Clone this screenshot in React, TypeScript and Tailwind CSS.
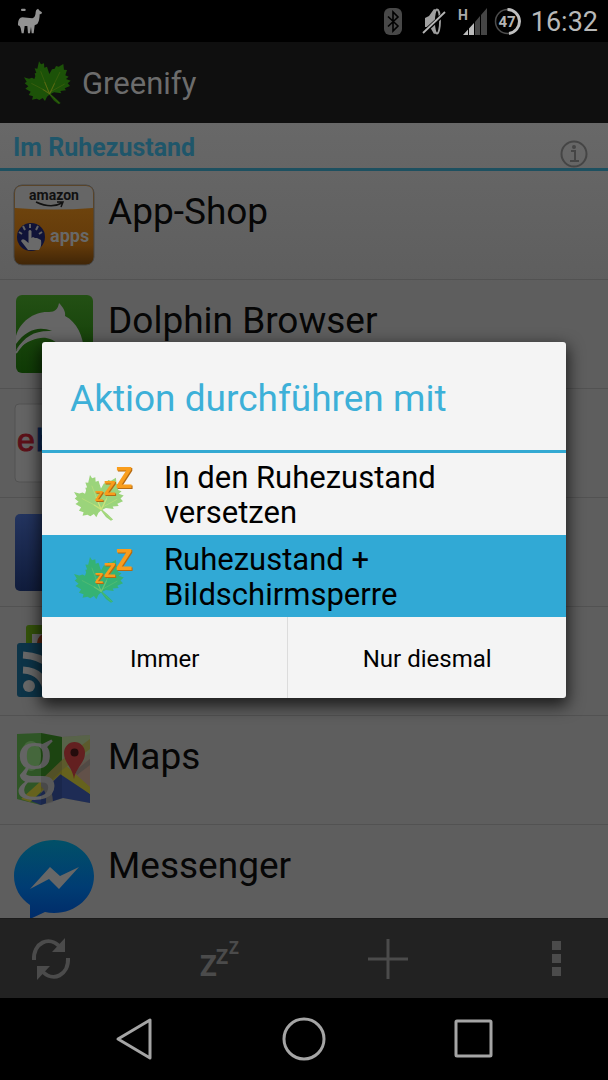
import React from 'react';

const LEAF =
  'M45 0 L51 9 L60 6 L61 19 L69 16 L76 38 L84 24 L92 22 L96 14 L104 16 L118 8 L120 25 L129 26 L124 42 L134 46 L126 53 L140 58 L131 66 L138 74 L122 81 L126 87 L109 89 L112 96 L90 93 L80 98 L94 110 L110 125 L104 129 L90 118 L76 100 L69 106 L63 119 L56 110 L46 116 L38 112 L24 115 L27 105 L14 101 L20 91 L4 82 L13 75 L2 66 L8 61 L0 48 L15 52 L24 49 L31 53 L34 44 L32 36 L37 35 L32 21 L40 22 Z';

interface LeafProps {
  fill: string;
  vein: string;
}

const LeafShape: React.FC<LeafProps> = ({ fill, vein }) => (
  <g>
    <path d={LEAF} fill={fill} />
    <path
      d="M76 97 L50 30 M76 97 L108 32 M74 93 L22 66 M76 93 L122 68 M76 97 Q90 112 106 126"
      stroke={vein}
      strokeWidth="2"
      fill="none"
      opacity="0.5"
    />
    <path d="M77 98 L62 62 M77 98 L56 84 M77 98 L92 66" stroke={vein} strokeWidth="3" fill="none" opacity="0.7" />
  </g>
);

const SleepLeaf: React.FC<LeafProps> = ({ fill, vein }) => (
  <svg className="h-16 w-16 shrink-0 overflow-visible" viewBox="0 0 64 64" aria-hidden="true">
    <g transform="translate(4 12) scale(0.355)">
      <LeafShape fill={fill} vein={vein} />
    </g>
    <g
      className="drop-shadow-[1px_1px_0_#b56a12]"
      fill="#f99d1c"
      fontFamily="Open Sans, sans-serif"
      fontWeight="700"
    >
      <text x="25" y="38" fontSize="14">Z</text>
      <text x="34" y="32" fontSize="20">Z</text>
      <text x="46" y="25" fontSize="28">Z</text>
    </g>
  </svg>
);

const AmazonIcon = () => (
  <>
    <defs>
      <linearGradient id="amz" x1="0" y1="0" x2="0" y2="1">
        <stop offset="0.3" stopColor="#6d430d" />
        <stop offset="0.75" stopColor="#633a0a" />
        <stop offset="1" stopColor="#3f2507" />
      </linearGradient>
    </defs>
    <rect x="1" y="1" width="80" height="80" rx="8" fill="url(#amz)" stroke="#474747" />
    <path d="M2 24 V9 Q2 2 9 2 H73 Q80 2 80 9 V24 Q41 27 2 24Z" fill="#666" />
    <text x="41" y="16" textAnchor="middle" fontSize="14" fontWeight="700" fontFamily="Roboto, sans-serif" fill="#111">
      amazon
    </text>
    <path d="M23 18 Q38 25 49 19 M44 18 L50 18 L48 23" stroke="#111" strokeWidth="1.500" fill="none" />
    <circle cx="18" cy="53" r="14" fill="#101338" />
    <path
      d="M17 40 V44 M10 42 L12 46 M25 42 L23 46 M6 48 L9 50 M29 48 L26 50"
      stroke="#626262"
      strokeWidth="2"
    />
    <path
      d="M15.500 47 Q17 45 18.500 47 V54 L20 53 L22 54 L24 54 L26 55 L28 56 Q29 62 26 66 H15 L8 57 Q9 54 12 56 L15.500 59Z"
      fill="#6a6a6a"
    />
    <text x="37" y="58" fontSize="18" fontWeight="700" fontFamily="Roboto, sans-serif" fill="#686868">
      apps
    </text>
  </>
);

const DolphinIcon = () => (
  <>
    <defs>
      <linearGradient id="dol" x1="0" y1="0" x2="0" y2="1">
        <stop offset="0" stopColor="#235014" />
        <stop offset="1" stopColor="#0f3a05" />
      </linearGradient>
    </defs>
    <rect x="3" y="2" width="77" height="78" rx="6" fill="url(#dol)" />
    <path
      d="M3 43 C7 28 22 18 36 19 C42 19 45 16 46 10 C50 14 53 19 52 23 C64 29 70 43 71 57 L56 50 H44 C36 44 25 40 3 57Z"
      fill="#666"
    />
    <path d="M3 51 C14 36 26 33 39 38 C22 37 12 43 3 57Z" fill="#153d0a" />
    <path d="M3 60 C14 42 28 40 40 44" stroke="#666" strokeWidth="2" fill="none" />
  </>
);

const EbayIcon = () => (
  <>
    <rect x="2" y="2" width="78" height="78" rx="4" fill="#646464" stroke="#525252" />
    <g fontSize="32" fontFamily="Liberation Sans, sans-serif">
      <text x="4" y="49" fill="#5c1018" stroke="#5c1018">e</text>
      <text x="23" y="49" fill="#0b2450" stroke="#0b2450">b</text>
      <text x="42" y="49" fill="#6b5a10">a</text>
      <text x="61" y="49" fill="#3b5410">y</text>
    </g>
  </>
);

const FacebookIcon = () => (
  <>
    <defs>
      <linearGradient id="fb" x1="0" y1="0" x2="0" y2="1">
        <stop offset="0" stopColor="#23345f" />
        <stop offset="1" stopColor="#101c3c" />
      </linearGradient>
    </defs>
    <rect x="2" y="3" width="78" height="77" rx="5" fill="url(#fb)" />
  </>
);

const ReaderIcon = () => (
  <>
    <rect x="13" y="5" width="56" height="45" rx="3" fill="#34520a" />
    <rect x="19" y="14" width="40" height="30" fill="#686868" />
    <circle cx="34" cy="23" r="10" fill="#5a2410" />
    <rect x="4" y="23" width="60" height="54" rx="3" fill="#0d3448" />
    <circle cx="16" cy="66" r="6" fill="#686868" />
    <path d="M10 50 Q32 51 34 75 M10 35 Q46 37 49 75" stroke="#686868" strokeWidth="7" fill="none" />
  </>
);

const MapsIcon = () => (
  <>
    <path d="M4 5 L28 7 L49 8 L77 6 V74 L50 69 L28 76 L4 70Z" fill="#5b594e" />
    <path d="M4 5 L28 4 V76 L4 70Z" fill="#2f5626" />
    <path d="M28 4 L49 8 V40 L28 58Z" fill="#204c14" />
    <path d="M49 8 L77 6 V24 L49 44Z" fill="#586349" />
    <path d="M77 30 L52 44 L77 59Z" fill="#625149" />
    <path d="M62 42 L77 30 V36 L64 46Z" fill="#514a45" />
    <path d="M18 72 L28 64 L50 43 L77 65 V74 L50 69 L28 76Z" fill="#1e2c55" />
    <path d="M8 70 L49 33 L77 58 V65 L47 45 L17 73Z" fill="#66621d" />
    <path d="M28 51 L49 31 L77 10 V20 L49 41 L28 61Z" fill="#5c5a2c" />
    <ellipse cx="18" cy="27" rx="10" ry="15" fill="#45673c" />
    <path d="M28 50 Q39 54 40 73 L33 75 Q34 62 28 57Z" fill="#525252" />
    <text x="2" y="53" fontSize="82" fontFamily="Liberation Serif, serif" fill="#646464">g</text>
    <path d="M28 4 V76 L49 69 V8Z" fill="#000" opacity="0.1" />
    <path d="M61 50 C59 37 51 34 51 24 A10.500 11 0 0 1 72 24 C72 34 63 38 61 50Z" fill="#632020" />
    <circle cx="61.500" cy="23.500" r="4" fill="#240c0c" />
  </>
);

const MessengerIcon = () => (
  <>
    <defs>
      <linearGradient id="msg" x1="0" y1="0" x2="0" y2="1">
        <stop offset="0" stopColor="#015068" />
        <stop offset="0.6" stopColor="#003c73" />
        <stop offset="1" stopColor="#002b69" />
      </linearGradient>
    </defs>
    <path
      d="M41 2 C63 2 81 18 81 38 C81 59 63 75 41 75 Q36 75 32 74 L17 81 V67 C7 60 1 50 1 38 C1 18 19 2 41 2Z"
      fill="url(#msg)"
    />
    <path d="M17 51 L37 29 L47 38 L66 29 L46 51 L36 41Z" fill="#676767" />
  </>
);

const apps = [
  { name: 'App-Shop', Icon: AmazonIcon },
  { name: 'Dolphin Browser', Icon: DolphinIcon },
  { name: 'eBay', Icon: EbayIcon },
  { name: 'Facebook', Icon: FacebookIcon },
  { name: 'News', Icon: ReaderIcon },
  { name: 'Maps', Icon: MapsIcon },
  { name: 'Messenger', Icon: MessengerIcon },
];

const StatusBar = () => (
  <div className="flex h-[42px] shrink-0 items-center bg-black pr-[10px] pl-[18px]">
    <svg className="h-[26px] w-[24px]" viewBox="0 0 72 78" aria-label="Alpaka">
      <path
        d="M60 2 L65 8 L72 13 L70 18 L65 19 Q65 38 58 48 L50 52 L47 76 H41 L39 56 L36 76 H30 L28 54 H20 L17 76 H11 L8 60 L5 54 L0 52 Q-1 30 13 28 L43 31 Q53 28 53 12 Q53 5 60 2Z"
        fill="#929292"
      />
      <rect x="9" y="2" width="14" height="7" rx="3" fill="#929292" />
    </svg>
    <div className="ml-auto flex items-center">
      <svg className="mr-5 h-[27px] w-[18px]" viewBox="0 0 18 27" aria-label="Bluetooth">
        <rect width="18" height="27" rx="6" fill="#484848" />
        <path d="M4 8.500 L14 18 L9 23 V4 L14 9 L4 18.500" stroke="#000" strokeWidth="1.600" fill="none" />
      </svg>
      <svg className="mr-3 h-[27px] w-[24px]" viewBox="0 0 24 27" aria-label="Stumm">
        <path d="M3 10 L7 8 L12 1 L14 2 V25 L12 26 L8 19 H3Z" fill="#a0a0a0" />
        <ellipse cx="15" cy="13.500" rx="3" ry="12" fill="#000" stroke="#a0a0a0" strokeWidth="1.800" />
        <path d="M0 26 L23 5" stroke="#000" strokeWidth="4" />
        <path d="M1 25 L23 4" stroke="#b5b5b5" strokeWidth="1.800" />
      </svg>
      <svg className="mr-[7px] h-[27px] w-[29px] overflow-visible" viewBox="0 0 29 27" aria-label="Mobilfunk H">
        <text x="0" y="12" fontSize="14" fontWeight="700" fontFamily="Roboto, sans-serif" fill="#aaa">H</text>
        <path d="M5 27 L10 21.500 V27Z M11 20.500 L16 15 V27 H11Z" fill="#bbb" />
        <path d="M17 14 L22 8 V27 H17Z M23 7 L29 0 V27 H23Z" fill="#454545" />
      </svg>
      <svg className="mr-[10px] h-[27px] w-[27px]" viewBox="0 0 27 27" aria-label="Akku 47%">
        <circle cx="13.500" cy="13.500" r="12" fill="none" stroke="#4d4d4d" strokeWidth="1.500" />
        <path d="M13.500 1.500 A12 12 0 0 1 15 25.400" fill="none" stroke="#c0c0c0" strokeWidth="3" />
        <text x="13" y="19" textAnchor="middle" fontSize="15" fontWeight="700" fontFamily="Roboto, sans-serif" fill="#b5b5b5">
          47
        </text>
      </svg>
      <span className="pt-0.5 text-[27px] leading-none text-[#b8b8b8]">16:32</span>
    </div>
  </div>
);

const Toolbar = () => (
  <div className="flex h-20 shrink-0 items-center justify-between border-t border-[#1c1c1c] bg-[#222] px-[11px]">
    <button type="button" aria-label="Aktualisieren" className="flex h-full w-20 items-center justify-center">
      <svg className="h-[42px] w-[40px]" viewBox="0 0 40 42" fill="none" stroke="#4b4b4b" strokeWidth="4">
        <path d="M3 22 C2 5 18 -3 29 9" />
        <path d="M37 20 C38 37 22 45 11 33" />
        <path d="M34 0 V14 H21Z M6 42 V28 H19Z" fill="#4b4b4b" stroke="none" />
      </svg>
    </button>
    <button type="button" aria-label="Ruhezustand" className="flex h-full w-20 items-center justify-center">
      <svg
        className="h-[42px] w-[40px] overflow-visible"
        viewBox="0 0 40 42"
        fill="#4b4b4b"
        fontFamily="Open Sans, sans-serif"
        fontWeight="700"
      >
        <text x="0" y="38" fontSize="29">Z</text>
        <text x="16" y="26" fontSize="21">Z</text>
        <text x="29" y="16" fontSize="17">Z</text>
      </svg>
    </button>
    <button type="button" aria-label="Hinzufügen" className="flex h-full w-20 items-center justify-center">
      <svg className="h-[42px] w-[42px]" viewBox="0 0 42 42" stroke="#4b4b4b" strokeWidth="3">
        <path d="M21 1 V41 M1 21 H41" />
      </svg>
    </button>
    <button type="button" aria-label="Mehr" className="flex h-full w-20 items-center justify-center">
      <svg className="h-[35px] w-[9px]" viewBox="0 0 9 35" fill="#4b4b4b">
        <path d="M0 0 H9 V9 H0Z M0 13 H9 V22 H0Z M0 26 H9 V35 H0Z" />
      </svg>
    </button>
  </div>
);

const NavBar = () => (
  <nav className="flex h-[82px] shrink-0 items-center justify-center gap-[74px] bg-black">
    <button type="button" aria-label="Zurück" className="flex w-24 justify-center">
      <svg className="h-11 w-11" viewBox="0 0 44 44" fill="none" stroke="#a5a5a5" strokeWidth="3" strokeLinejoin="round">
        <path d="M38 3 V41 L6 22Z" />
      </svg>
    </button>
    <button type="button" aria-label="Startseite" className="flex w-24 justify-center">
      <svg className="h-11 w-11" viewBox="0 0 44 44" fill="none" stroke="#a5a5a5" strokeWidth="3">
        <circle cx="22" cy="22" r="20" />
      </svg>
    </button>
    <button type="button" aria-label="Letzte Apps" className="flex w-24 justify-center">
      <svg className="h-11 w-11" viewBox="0 0 44 44" fill="none" stroke="#a5a5a5" strokeWidth="3">
        <rect x="4" y="4" width="35" height="35" rx="1" />
      </svg>
    </button>
  </nav>
);

const ActionDialog = () => (
  <div
    role="dialog"
    aria-labelledby="dialog-title"
    className="w-full overflow-hidden rounded-[3px] bg-[#f4f4f4] text-black shadow-[0_6px_16px_2px_rgba(0,0,0,0.7)]"
  >
    <h2 id="dialog-title" className="border-b-3 border-[#33a9d2] px-7 pt-[34px] pb-[29px] text-[37px] leading-[45px] text-[#3db0d8]">
      Aktion durchführen mit
    </h2>
    <button type="button" className="flex w-full items-center gap-[30px] pt-[7px] pb-[5px] pr-16 pl-7 text-left text-[31px] leading-[35px]">
      <SleepLeaf fill="#9bd47b" vein="#dcea7c" />
      <span>In den Ruhezustand versetzen</span>
    </button>
    <button type="button" className="flex w-full items-center gap-[30px] bg-[#31a9d5] pt-[7px] pb-[5px] pr-16 pl-7 text-left text-[31px] leading-[35px]">
      <SleepLeaf fill="#35b274" vein="#7cca72" />
      <span className="max-w-72">Ruhezustand + Bildschirmsperre</span>
    </button>
    <div className="flex text-2xl leading-8">
      <button type="button" className="w-[47%] border-r border-[#dcdcdc] pt-[26px] pb-[23px]">Immer</button>
      <button type="button" className="flex-1 pt-[26px] pb-[23px]">Nur diesmal</button>
    </div>
  </div>
);

export default function App() {
  return (
    <div className="flex h-screen flex-col bg-black font-['Roboto','Liberation_Sans',sans-serif]">
      <StatusBar />
      <div className="relative flex min-h-0 flex-1 flex-col">
        <header className="flex h-[81px] shrink-0 items-center gap-[11px] bg-[#0f0f0f] px-6">
          <svg className="h-[44px] w-[47px]" viewBox="0 0 141 130" aria-hidden="true">
            <LeafShape fill="#1c5208" vein="#6c7114" />
          </svg>
          <h1 className="pt-1 text-[31px] text-[#6c6c6c]">Greenify</h1>
        </header>

        <main className="min-h-0 flex-1 overflow-hidden bg-linear-to-b from-[#686868] to-[#5e5e5e] to-20%">
          <div className="flex h-12 items-center justify-between border-b-3 border-[#1d5060] pr-5 pl-[13px]">
            <h2 className="pt-1 text-[25px] font-bold text-[#1f566a]">Im Ruhezustand</h2>
            <button type="button" aria-label="Info" className="pt-4">
              <svg className="h-[28px] w-[28px]" viewBox="0 0 28 28" fill="none" stroke="#454545" strokeWidth="2">
                <circle cx="14" cy="14" r="12.500" />
                <path d="M11 11 H15 V21 M10 21 H19" />
                <circle cx="14" cy="7" r="1" fill="#454545" />
              </svg>
            </button>
          </div>
          <ul>
            {apps.map(({ name, Icon }) => (
              <li key={name} className="flex h-[109px] gap-[13px] border-b border-[#525252] px-[13px] pt-[13px]">
                <svg className="h-[82px] w-[82px] shrink-0 overflow-visible" viewBox="0 0 82 82" aria-hidden="true">
                  <Icon />
                </svg>
                <span className="pt-1 text-[37px] leading-[48px] text-[#060606]">{name}</span>
              </li>
            ))}
          </ul>
        </main>

        <Toolbar />

        <div className="absolute inset-0 flex items-center justify-center px-[42px]">
          <ActionDialog />
        </div>
      </div>
      <NavBar />
    </div>
  );
}
